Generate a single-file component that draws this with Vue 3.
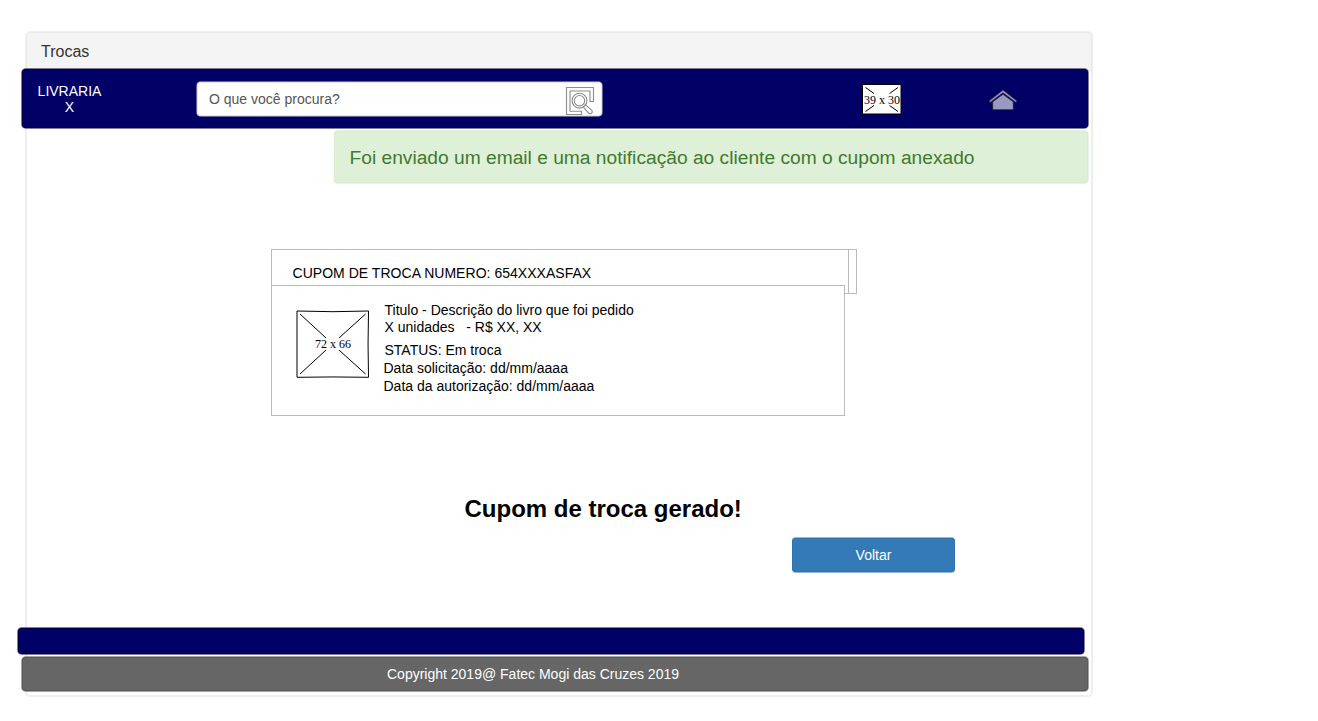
<script setup>
const lines = [
  { text: 'Titulo - Descrição do livro que foi pedido', kind: 'title' },
  { text: 'X unidades   - R$ XX, XX', kind: 'units' },
  { text: 'STATUS: Em troca', kind: 'status' },
  { text: 'Data solicitação: dd/mm/aaaa', kind: 'date' },
  { text: 'Data da autorização: dd/mm/aaaa', kind: 'date' },
]
</script>

<template>
  <div class="page">
    <main class="panel">
      <header class="heading">Trocas</header>
      <nav class="navbar">
        <div class="brand">LIVRARIA<br />X</div>
        <div class="search">
          <span>O que você procura?</span>
          <svg class="search-icon" width="30" height="30" viewBox="0 0 30 30" fill="none">
            <path d="M1.5 1.5H28.5V15.5H25V5H5V25.2H16.5V28.5H1.5Z" stroke="#8c8c8c" stroke-width="1.1" />
            <path d="M19.6 18.4L21.2 19.4L26.8 24.4Q28 26 26.6 27.3Q25 28.4 23.6 27L18.7 21.4L18.2 19.8" stroke="#8c8c8c" stroke-width="1.1" />
            <circle cx="14.5" cy="14.7" r="7.4" stroke="#8c8c8c" stroke-width="1.1" />
            <circle cx="14.5" cy="14.7" r="5.2" stroke="#8c8c8c" stroke-width="1.1" />
          </svg>
        </div>
        <svg class="thumb" width="40" height="31" viewBox="0 0 40 31">
          <rect x=".5" y=".5" width="38.5" height="29.5" fill="#fff" stroke="#000" />
          <path d="M3.5 3.5L12 9.5M36 3.5L27.5 9.5M3.5 27.5L12 21.5M36 27.5L27.5 21.5" stroke="#000" />
          <text x="20" y="19.5" text-anchor="middle">39 x 30</text>
        </svg>
        <svg class="home" width="30" height="22" viewBox="0 0 30 22">
          <path d="M1 12L15 1L29 12L28 13.4L15 3.8L2 13.4Z" fill="#9999c2" stroke="#202033" stroke-width=".6" />
          <path d="M4.7 12.8L15 5.2L25.3 12.8V20.8H4.7Z" fill="#9999c2" stroke="#202033" stroke-width=".8" />
        </svg>
      </nav>
      <div class="alert">Foi enviado um email e uma notificação ao cliente com o cupom anexado</div>
      <section class="coupon">
        <div class="coupon-head">
          <span>CUPOM DE TROCA NUMERO: 654XXXASFAX</span>
        </div>
        <div class="coupon-body">
          <svg class="book" width="74" height="70" viewBox="0 0 74 70" fill="none">
            <path d="M1 2Q37 3.4 72.5 2Q71.6 35 72.5 68.3Q37 67.6 1 68.3Z" stroke="#000" />
            <path d="M4 5L30 29M69.5 5L43 29M4 65L30 41M69.5 65L43 41" stroke="#000" />
            <text x="37" y="39" text-anchor="middle" fill="#000">72 x 66</text>
          </svg>
          <div class="details">
            <div v-for="line in lines" :key="line.text" :class="line.kind">{{ line.text }}</div>
          </div>
        </div>
      </section>
      <h1>Cupom de troca gerado!</h1>
      <button class="back">Voltar</button>
      <div class="strip"></div>
      <footer class="copyright">Copyright 2019@ Fatec Mogi das Cruzes 2019</footer>
    </main>
  </div>
</template>

<style>
body {
  background: #fff;
}
</style>

<style scoped>
.page {
  box-sizing: border-box;
  height: 721px;
  padding: 32px 0 0 26px;
  font: 14px/16px "Liberation Sans", Arial, sans-serif;
  color: #000;
}
.panel {
  display: flex;
  flex-direction: column;
  width: 1066px;
  height: 664px;
  border-radius: 4px;
  box-shadow: 0 0 0 1px #eee, inset 0 0 0 1px #eee;
}
.heading {
  box-sizing: border-box;
  flex: none;
  height: 39px;
  padding: 10px 14px 0;
  border: 1px solid #e9e9e9;
  border-radius: 4px 4px 0 0;
  background: #f4f4f4;
  color: #333;
  font-size: 16px;
  line-height: 18px;
}
.navbar {
  display: flex;
  flex: none;
  position: relative;
  width: 1066px;
  height: 59px;
  margin: -2px 0 0 -4px;
  border-radius: 4px;
  background: #006;
  box-shadow: 0 0 0 1px rgba(0, 0, 51, .5), inset 0 0 0 1px #00004d;
}
.brand {
  width: 64px;
  margin: 14px 0 0 15.5px;
  color: #fff;
  text-align: center;
}
.search {
  display: flex;
  flex: none;
  justify-content: space-between;
  width: 404.5px;
  height: 34px;
  margin: 13px 0 0 95.5px;
  border-radius: 4px;
  background: #fff;
  box-shadow: 0 0 0 1px rgba(204, 204, 204, .5), inset 0 0 0 1px #e5e5e5;
  color: #555;
  line-height: 34px;
}
.search span {
  margin-left: 12px;
}
.search-icon {
  margin: 3.5px 6.5px 0 0;
}
.thumb {
  margin: 15px 0 0 260.5px;
}
.home {
  margin: 20px 0 0 86px;
}
.thumb {
  position: relative;
  top: -.5px;
}
.thumb text,
.book text {
  font: 12px "Liberation Serif", serif;
}
.alert {
  box-sizing: border-box;
  flex: none;
  width: 754px;
  height: 52px;
  margin: 3px 0 0 308px;
  padding-left: 15.5px;
  border-radius: 4px;
  background: #dff0d8;
  box-shadow: 0 -1px 0 rgba(214, 233, 198, .5), 0 1px 0 rgba(214, 233, 198, .5), 1px 0 0 rgba(214, 233, 198, .5), inset 0 0 0 1px #daecce;
  color: #3f7a2d;
  font-size: 19.2px;
  line-height: 53px;
  white-space: nowrap;
}
.coupon {
  flex: none;
  width: 586px;
  margin: 66px 0 0 245px;
}
.coupon-head {
  box-sizing: border-box;
  height: 45px;
  padding-right: 7px;
  border: 1px solid #bbb;
}
.coupon-head span {
  box-sizing: border-box;
  display: block;
  height: 43px;
  padding: 15px 0 0 20.5px;
  border-right: 1px solid #bbb;
  letter-spacing: .03px;
}
.coupon-body {
  display: flex;
  position: relative;
  box-sizing: border-box;
  width: 574px;
  height: 131px;
  margin-top: -9px;
  border: 1px solid #bbb;
  background: #fff;
}
.book {
  flex: none;
  margin: 23px 0 0 24px;
}
.details {
  margin: 16px 0 0 14px;
  white-space: pre;
}
.title {
  margin-left: .5px;
  line-height: 17px;
}
.units {
  margin-left: .5px;
  line-height: 17px;
}
.status {
  margin: 6px 0 0 .5px;
  line-height: 17px;
}
.date {
  line-height: 18px;
  margin-left: -.5px;
}
h1 {
  flex: none;
  margin: 79px 0 0 438.5px;
  font-size: 24px;
  line-height: 28px;
}
.back {
  flex: none;
  width: 163px;
  height: 34px;
  margin: 15px 0 0 766px;
  padding: 0;
  border: 0;
  border-radius: 4px;
  background: #337ab7;
  box-shadow: 0 -1px 0 rgba(46, 109, 164, .5), 0 1px 0 rgba(46, 109, 164, .5), inset 0 0 0 1px #3074ae;
  color: #fff;
  font: inherit;
}
.strip,
.copyright {
  flex: none;
  width: 1066px;
  border-radius: 4px;
}
.strip {
  height: 26px;
  margin: 56px 0 0 -8px;
  background: #006;
  box-shadow: 0 0 0 1px rgba(0, 0, 51, .5), inset 0 0 0 1px #00004d;
}
.copyright {
  box-sizing: border-box;
  height: 34px;
  margin: 3px 0 0 -4px;
  padding: 9px 44px 0 0;
  background: #666;
  box-shadow: 0 0 0 1px rgba(77, 77, 77, .5), inset 0 0 0 1px #5a5a5a;
  color: #fff;
  text-align: center;
}
</style>
